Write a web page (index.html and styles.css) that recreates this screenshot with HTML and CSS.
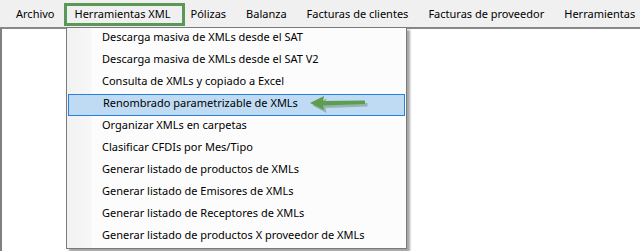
FILE: index.html
```html
<!DOCTYPE html>
<html lang="es">
<head>
  <meta charset="UTF-8">
  <title>Herramientas XML</title>
  <link rel="stylesheet" href="styles.css">
</head>
<body>
  <div class="menubar">
    <span class="menu-item">Archivo</span>
    <span class="menu-item active">Herramientas XML</span>
    <span class="menu-item">Pólizas</span>
    <span class="menu-item">Balanza</span>
    <span class="menu-item">Facturas de clientes</span>
    <span class="menu-item">Facturas de proveedor</span>
    <span class="menu-item">Herramientas</span>
  </div>

  <div class="workspace"></div>

  <!-- callout around the opened menu -->
  <div class="callout-box"></div>

  <div class="dropdown">
    <div class="dropdown-item">Descarga masiva de XMLs desde el SAT</div>
    <div class="dropdown-item">Descarga masiva de XMLs desde el SAT V2</div>
    <div class="dropdown-item">Consulta de XMLs y copiado a Excel</div>
    <div class="dropdown-item selected">Renombrado parametrizable de XMLs</div>
    <div class="dropdown-item">Organizar XMLs en carpetas</div>
    <div class="dropdown-item">Clasificar CFDIs por Mes/Tipo</div>
    <div class="dropdown-item">Generar listado de productos de XMLs</div>
    <div class="dropdown-item">Generar listado de Emisores de XMLs</div>
    <div class="dropdown-item">Generar listado de Receptores de XMLs</div>
    <div class="dropdown-item">Generar listado de productos X proveedor de XMLs</div>
  </div>

  <svg class="pointer-arrow" width="62" height="18" viewBox="0 0 62 18">
    <path d="M3 8.5 L17 1.5 L16 6.5 L58 6 L58 9.5 L16 11 L17 16 Z" fill="#3f6f36" opacity="0.35" transform="translate(1.5,2)"/>
    <path d="M2 8 L16 1 L15 6 L57 5.5 L57 9 L15 10.5 L16 15 Z" fill="#5e9c4e"/>
  </svg>
</body>
</html>
```

FILE: styles.css
```css
body {
  margin: 0;
  background: white;
  font-family: "Noto Sans", "Open Sans", sans-serif;
  font-size: 11px;
  color: #000;
  width: 640px;
  height: 251px;
  overflow: hidden;
  position: relative;
}
.menubar {
  height: 27px;
  background: #f0f0f0;
  display: flex;
  align-items: center;
  padding-left: 6px;
  white-space: nowrap;
}
.menu-item {
  padding: 0 10px;
  line-height: 20px;
}
.workspace {
  height: 224px;
  border-top: 2px solid #888;
  border-left: 2px solid #808080;
  background: white;
}
.callout-box {
  position: absolute;
  left: 64px;
  top: 3px;
  width: 115px;
  height: 17px;
  border: 3px solid #5b9857;
}
.dropdown {
  position: absolute;
  left: 66px;
  top: 27px;
  width: 339px;
  border: 1px solid #7a7a7a;
  background: linear-gradient(to right, #f1f1f1 0, #f7f7f7 24px, #fcfcfc 25px);
  box-shadow: 3px 3px 2px rgba(0,0,0,0.35);
  padding: 0;
}
.dropdown-item {
  height: 22px;
  line-height: 18px;
  padding-left: 35px;
  white-space: nowrap;
  box-sizing: border-box;
}
.dropdown-item.selected {
  margin: 0 1px;
  padding-left: 34px;
  background: #bfdbf4;
  border: 1px solid #2a7fdb;
  line-height: 16px;
}
.pointer-arrow {
  position: absolute;
  left: 308px;
  top: 95px;
}
```
